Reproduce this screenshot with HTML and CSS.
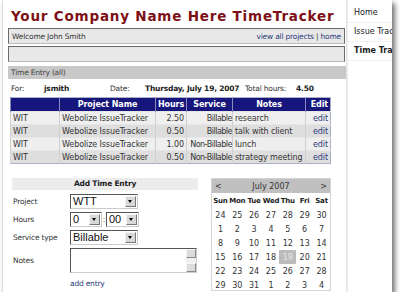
FILE: index.html
```html
<!DOCTYPE html>
<html>
<head>
  <link rel="stylesheet" href="styles.css">
</head>
<body>
<div class="shot">
  <div class="main">
    <h1 class="title">Your Company Name Here TimeTracker</h1>
    <div class="bar welcome">
      <span>Welcome John Smith</span>
      <span class="links"><a href="#">view all projects</a> | <a href="#">home</a></span>
    </div>
    <div class="bar"></div>
    <div class="section">Time Entry (all)</div>
    <div class="info">
      <span class="lbl">For:</span><b class="user">jsmith</b>
      <span class="lbl date">Date:</span><b class="day">Thursday, July 19, 2007</b>
      <span class="lbl total">Total hours:</span><b>4.50</b>
    </div>
    <table class="entries">
      <tr>
        <th class="c1"></th><th class="c2">Project Name</th><th class="c3">Hours</th>
        <th class="c4">Service</th><th class="c5">Notes</th><th class="c6">Edit</th>
      </tr>
      <tr class="odd"><td>WIT</td><td>Webolize IssueTracker</td><td class="r">2.50</td><td class="r svc">Billable</td><td>research</td><td class="r"><a href="#">edit</a></td></tr>
      <tr class="even"><td>WIT</td><td>Webolize IssueTracker</td><td class="r">0.50</td><td class="r svc">Billable</td><td>talk with client</td><td class="r"><a href="#">edit</a></td></tr>
      <tr class="odd"><td>WIT</td><td>Webolize IssueTracker</td><td class="r">1.00</td><td class="r svc">Non-Billable</td><td>lunch</td><td class="r"><a href="#">edit</a></td></tr>
      <tr class="even"><td>WIT</td><td>Webolize IssueTracker</td><td class="r">0.50</td><td class="r svc">Non-Billable</td><td>strategy meeting</td><td class="r"><a href="#">edit</a></td></tr>
    </table>
    <div class="lower">
      <div class="addform">
        <div class="addhead">Add Time Entry</div>
        <div class="row"><span class="flbl">Project</span><span class="sel w68"><span>WTT</span><i class="arr"></i></span></div>
        <div class="row"><span class="flbl">Hours</span><span class="sel w32"><span>0</span><i class="arr"></i></span><span class="colon">:</span><span class="sel w33"><span>00</span><i class="arr"></i></span></div>
        <div class="row"><span class="flbl">Service type</span><span class="sel w68"><span>Billable</span><i class="arr"></i></span></div>
        <div class="row notes"><span class="flbl">Notes</span><span class="area"><i class="sb"><i class="up"></i><i class="dn"></i></i></span></div>
        <div class="row add"><span class="flbl"></span><a href="#">add entry</a></div>
      </div>
      <div class="cal">
        <div class="calhead"><span>&lt;</span><span>July 2007</span><span>&gt;</span></div>
        <table class="days">
          <tr><th>Sun</th><th>Mon</th><th>Tue</th><th>Wed</th><th>Thu</th><th>Fri</th><th>Sat</th></tr>
          <tr><td>24</td><td>25</td><td>26</td><td>27</td><td>28</td><td>29</td><td>30</td></tr>
          <tr><td>1</td><td>2</td><td>3</td><td>4</td><td>5</td><td>6</td><td>7</td></tr>
          <tr><td>8</td><td>9</td><td>10</td><td>11</td><td>12</td><td>13</td><td>14</td></tr>
          <tr><td>15</td><td>16</td><td>17</td><td>18</td><td class="sel-day">19</td><td>20</td><td>21</td></tr>
          <tr><td>22</td><td>23</td><td>24</td><td>25</td><td>26</td><td>27</td><td>28</td></tr>
          <tr><td>29</td><td>30</td><td>31</td><td>1</td><td>2</td><td>3</td><td>4</td></tr>
        </table>
      </div>
    </div>
  </div>
  <div class="side">
    <div class="item">Home</div>
    <div class="item">Issue Tracker</div>
    <div class="item cur">Time Tracker</div>
  </div>
</div>
</body>
</html>
```

FILE: styles.css
```css
body {
  margin: 0;
  background: #fff;
  font-family: "DejaVu Sans", Verdana, sans-serif;
  font-size: 7.5px;
  letter-spacing: -0.2px;
  color: #333;
}

a {
  color: #2b3a7a;
  text-decoration: none;
}

.shot {
  display: flex;
  width: 390px;
  height: 292px;
  margin-left: 2px;
  background: #fff;
  border-left: 1px solid #ddd;
  box-sizing: border-box;
  overflow: hidden;
  box-shadow: 3px 3px 5px rgba(0, 0, 0, 0.55);
}

.main {
  width: 346px;
  padding-left: 5px;
  box-sizing: border-box;
  border-right: 1px solid #e4e4e4;
}

.title {
  margin: 9px 0 5px 3px;
  font-size: 13.5px;
  line-height: 14px;
  letter-spacing: 0.8px;
  color: #7d1016;
  white-space: nowrap;
}

.bar {
  display: flex;
  justify-content: space-between;
  align-items: center;
  width: 337px;
  height: 16px;
  margin-bottom: 2px;
  padding: 0 3px;
  box-sizing: border-box;
  background: #e8e8e8;
  border: 1px solid #6a6a6a;
  border-bottom-color: #bbb;
}

.section {
  width: 335px;
  height: 13px;
  line-height: 13px;
  margin-top: 4px;
  padding-left: 3px;
  background: #c8c8c8;
  color: #444;
}

.info {
  display: flex;
  height: 18px;
  align-items: center;
  padding-left: 3px;
  white-space: nowrap;
}
.info b {
  color: #222;
}
.info .lbl {
  width: 33px;
}
.info .user {
  width: 66px;
}
.info .date {
  width: 35px;
}
.info .day {
  width: 100px;
}
.info .total {
  width: 51px;
}

.entries {
  border-collapse: collapse;
  margin-left: 2px;
  width: 314px;
  table-layout: fixed;
  border: 1px solid #aab0c8;
  font-size: 8px;
  letter-spacing: -0.1px;
}
.entries th {
  background: #16167c;
  color: #fff;
  height: 13px;
  padding: 0 2px;
  border-left: 1px solid #8a8ac0;
  white-space: nowrap;
}
.entries td {
  height: 12px;
  padding: 0 2px;
  white-space: nowrap;
  border-left: 1px solid #d0d0d0;
  border-top: 1px solid #e6e6e6;
}
.entries .r {
  text-align: right;
}
.entries .svc {
  letter-spacing: -0.5px;
  padding-right: 0;
}
.c1 { width: 44px; }
.c2 { width: 91px; }
.c3 { width: 26px; }
.c4 { width: 41px; }
.c5 { width: 68px; }
.c6 { width: 20px; text-align: right; }
.odd td {
  background: #efefef;
}
.even td {
  background: #dedede;
}

.lower {
  display: flex;
  margin-top: 14px;
}

.addform {
  width: 186px;
  margin-left: 4px;
}
.addhead {
  height: 12px;
  line-height: 12px;
  background: #ececec;
  text-align: center;
  font-weight: bold;
  color: #222;
  margin-bottom: 2px;
}
.row {
  display: flex;
  align-items: center;
  height: 18px;
}
.flbl {
  width: 57px;
  padding-left: 1px;
}
.sel {
  display: flex;
  justify-content: space-between;
  align-items: center;
  height: 15px;
  box-sizing: border-box;
  border: 1px solid #555;
  border-right-color: #ccc;
  border-bottom-color: #ccc;
  background: #fff;
  padding-left: 2px;
  font-family: "Liberation Sans", Arial, sans-serif;
  font-size: 11px;
  letter-spacing: 0;
  color: #111;
}
.w68 { width: 68px; }
.w32 { width: 32px; }
.w33 { width: 33px; }
.colon {
  width: 4px;
  text-align: center;
}
.arr {
  position: relative;
  width: 11px;
  height: 11px;
  margin-right: 1px;
  background: #d8d8d8;
  border: 1px solid #f4f4f4;
  border-right-color: #777;
  border-bottom-color: #777;
  box-sizing: border-box;
}
.arr::after {
  content: "";
  position: absolute;
  left: 2px;
  top: 3px;
  border-left: 2px solid transparent;
  border-right: 2px solid transparent;
  border-top: 3px solid #000;
}
.notes {
  height: 26px;
  margin-top: 1px;
}
.area {
  display: flex;
  justify-content: flex-end;
  width: 127px;
  height: 25px;
  box-sizing: border-box;
  border: 1px solid #555;
  border-right-color: #ccc;
  border-bottom-color: #ccc;
  background: #fff;
}
.sb {
  display: flex;
  flex-direction: column;
  justify-content: space-between;
  width: 10px;
  background: #f0f0f0;
}
.sb i {
  height: 9px;
  background: #dcdcdc;
  border: 1px solid #f8f8f8;
  border-right-color: #888;
  border-bottom-color: #888;
  box-sizing: border-box;
}
.add {
  height: 16px;
  margin-top: 2px;
}

.cal {
  width: 120px;
  height: 113px;
  margin-left: 13px;
  border: 1px solid #d4d4d4;
  box-sizing: border-box;
  font-size: 8px;
  letter-spacing: 0;
}
.calhead {
  display: flex;
  justify-content: space-between;
  align-items: center;
  height: 14px;
  padding: 0 3px;
  background: #c0c0c0;
  color: #333;
}
.days {
  border-collapse: collapse;
  width: 100%;
  table-layout: fixed;
  text-align: center;
}
.days th {
  height: 15px;
  color: #222;
  padding: 0;
  font-size: 7px;
  letter-spacing: -0.2px;
}
.days td {
  height: 14px;
  padding: 0;
  color: #333;
}
.days .sel-day {
  background: #bcbcbc;
  color: #e8e8e8;
}

.side {
  flex: 1;
  padding-top: 4px;
  border-left: 1px solid #ececec;
  font-size: 8px;
  letter-spacing: 0;
}
.side .item {
  height: 18px;
  line-height: 18px;
  padding-left: 6px;
  white-space: nowrap;
  overflow: hidden;
  color: #222;
  border-bottom: 1px solid #f0f0f0;
}
.side .cur {
  font-weight: bold;
}
```
